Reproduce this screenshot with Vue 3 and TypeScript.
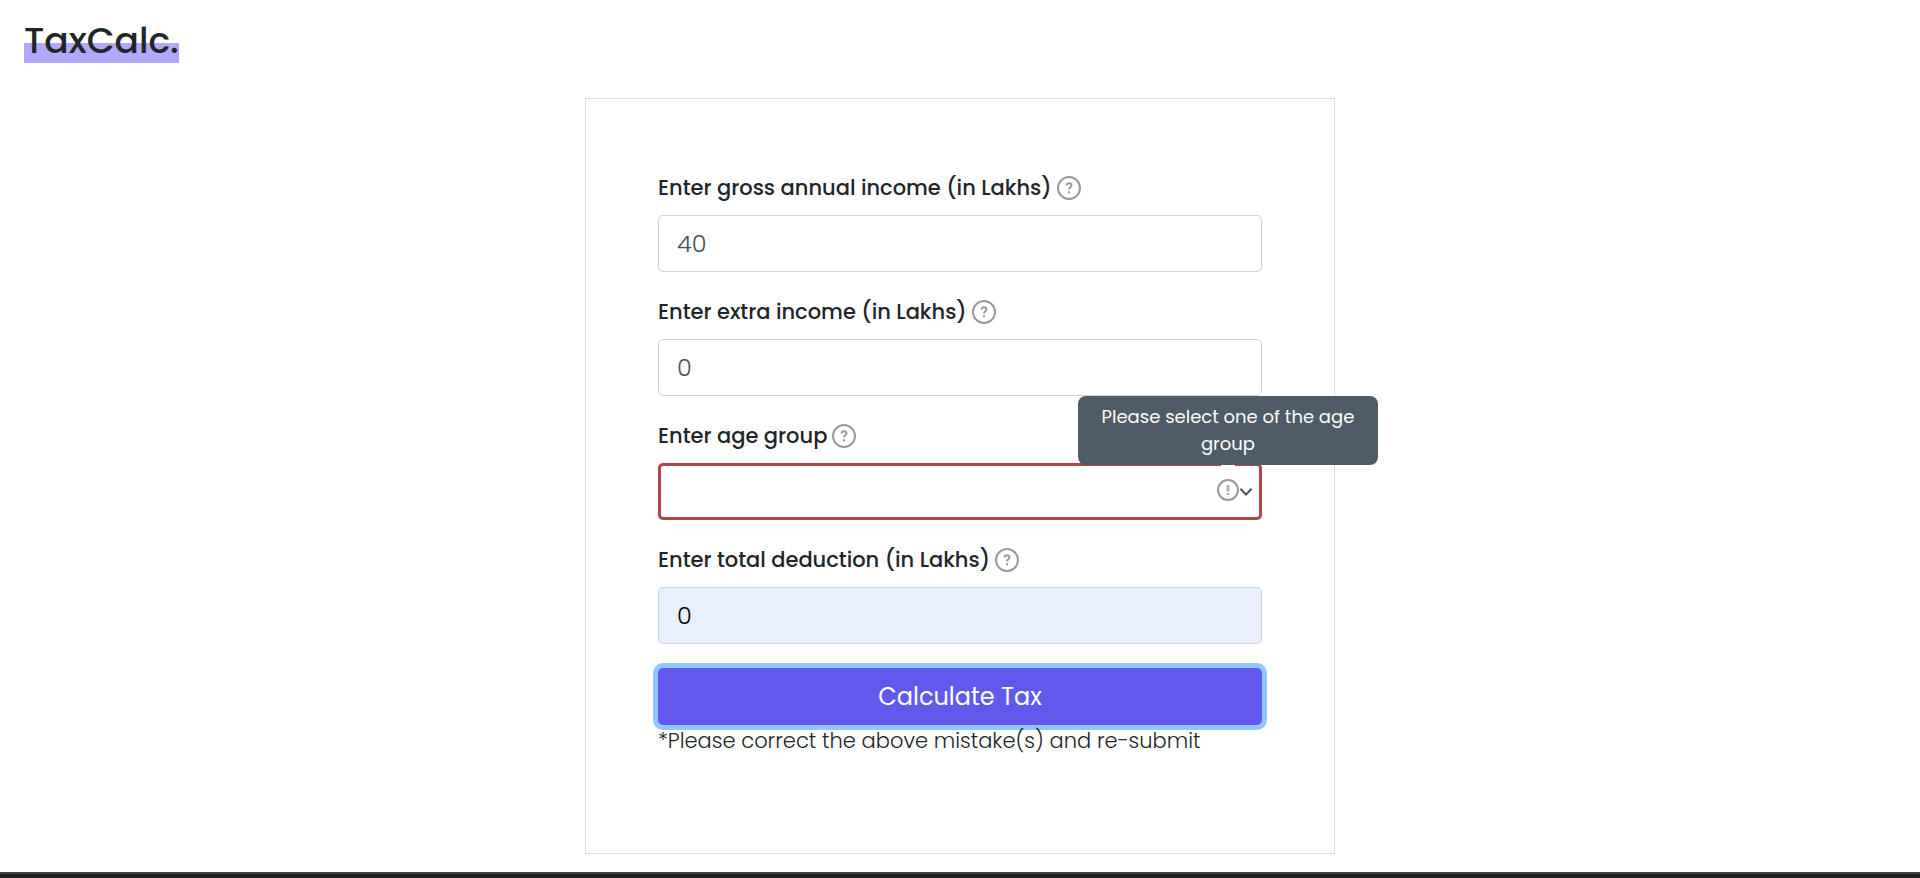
<script setup lang="ts">
import { reactive } from 'vue'

interface Field {
  id: 'income' | 'extra' | 'age' | 'deduction'
  label: string
  kind: 'text' | 'select'
  filled?: boolean
}

const fields: Field[] = [
  { id: 'income', label: 'Enter gross annual income (in Lakhs)', kind: 'text' },
  { id: 'extra', label: 'Enter extra income (in Lakhs)', kind: 'text' },
  { id: 'age', label: 'Enter age group', kind: 'select' },
  { id: 'deduction', label: 'Enter total deduction (in Lakhs)', kind: 'text', filled: true },
]

const ageGroups = ['<40', '≥40 & <60', '≥60']

const values = reactive<Record<Field['id'], string>>({
  income: '40',
  extra: '0',
  age: '',
  deduction: '0',
})
</script>

<template>
  <div class="page">
    <header class="header">
      <h1 class="brand">TaxCalc.</h1>
    </header>

    <main class="main">
      <form class="card" novalidate @submit.prevent>
        <div v-for="field in fields" :key="field.id" class="field">
          <div class="label-row">
            <label :for="field.id">{{ field.label }}</label>
            <svg class="help" viewBox="0 0 24 24" aria-hidden="true">
              <circle cx="12" cy="12" r="11" />
              <path d="M9.600 9.400C9.600 7.900 10.600 7.200 12 7.200s2.400.8 2.400 2.200c0 1.700-2.300 1.800-2.300 4" />
              <path d="M12 15.200v2" />
            </svg>
          </div>
          <div v-if="field.kind === 'select'" class="select-wrap">
            <select :id="field.id" v-model="values.age" class="control invalid" aria-describedby="age-error">
              <option value=""></option>
              <option v-for="group in ageGroups" :key="group" :value="group">{{ group }}</option>
            </select>
            <div class="marks">
              <span class="warning">
                <svg class="alert" viewBox="0 0 22 22" aria-hidden="true">
                  <circle cx="11" cy="11" r="10" />
                  <path d="M11 6v6.5M11 14v2" stroke="#b0b0b0" stroke-width="3" />
                </svg>
                <span id="age-error" class="tooltip" role="tooltip">Please select one of the age group</span>
              </span>
              <svg class="chevron" viewBox="0 0 14 10" aria-hidden="true">
                <path d="M1.500 1.800 7 7.600l5.500-5.800" />
              </svg>
            </div>
          </div>
          <input
            v-else
            :id="field.id"
            v-model="values[field.id]"
            class="control"
            :class="{ filled: field.filled }"
            type="text"
          />
        </div>
        <button class="submit" type="submit">Calculate Tax</button>
        <p class="message">*Please correct the above mistake(s) and re-submit</p>
      </form>
    </main>

    <footer class="footer"></footer>
  </div>
</template>

<style>
body {
  margin: 0;
  background: #fff;
}
</style>

<style scoped>
.page {
  display: flex;
  flex-direction: column;
  min-height: 100vh;
  color: #212529;
  font-family: Poppins, Inter, "Open Sans", sans-serif;
}

.page *,
.page *::before,
.page *::after {
  box-sizing: border-box;
}

.header {
  display: flex;
  padding: 19px 24px 35px;
}

.brand {
  margin: 0;
  font-size: 36px;
  font-weight: 500;
  line-height: 44px;
  background: linear-gradient(transparent 24px, #b1a9f7 24px);
}

.main {
  display: flex;
  justify-content: center;
  padding-bottom: 18px;
}

.card {
  display: flex;
  flex-direction: column;
  width: 750px;
  max-width: 100%;
  padding: 73px 72px 96px;
  border: 1px solid #dcdde2;
}

.field {
  display: flex;
  flex-direction: column;
  gap: 12px;
  margin-bottom: 24px;
}

.label-row {
  display: flex;
  align-items: center;
  gap: 5px;
  font-size: 21px;
  font-weight: 500;
  line-height: 31px;
}

.help,
.alert {
  flex: none;
  width: 24px;
  height: 24px;
  fill: none;
  stroke: #999;
  stroke-width: 2;
}

.alert {
  display: block;
  width: 22px;
  height: 22px;
}

.control {
  width: 100%;
  height: 57px;
  padding: 0 18px;
  border: 1px solid #ced4da;
  border-radius: 5px;
  outline: none;
  background: #fff;
  color: #495057;
  font-family: inherit;
  font-size: 24px;
  font-weight: 300;
  appearance: none;
}

.filled {
  background: #e8f0fe;
  color: #000;
}

.select-wrap {
  position: relative;
  display: flex;
}

.invalid {
  border: 3px solid #a94a47;
}

.marks {
  position: absolute;
  top: 0;
  right: 9px;
  bottom: 0;
  display: flex;
  align-items: center;
  pointer-events: none;
}

.warning {
  position: relative;
  padding-bottom: 4px;
}

.chevron {
  width: 14px;
  height: 10px;
  fill: none;
  stroke: #454c55;
  stroke-width: 2;
}

.tooltip {
  position: absolute;
  bottom: 100%;
  left: 50%;
  width: 300px;
  margin: 0 0 14px -150px;
  padding: 7px 16px 8px;
  border-radius: 8px;
  background: #4f5b67;
  color: #fff;
  font-size: 18px;
  line-height: 27px;
  text-align: center;
}

.tooltip::after {
  content: "";
  position: absolute;
  top: 100%;
  left: 50%;
  width: 14px;
  height: 3px;
  margin-left: -7px;
  background: #fff;
}

.submit {
  height: 57px;
  border: 0;
  border-radius: 5px;
  background: #6358ec;
  box-shadow: 0 0 0 5px #91c6ff;
  color: #fff;
  font-family: inherit;
  font-size: 24px;
}

.message {
  position: relative;
  margin: 0;
  font-size: 21px;
  font-weight: 300;
  line-height: 32px;
}

.footer {
  height: 6px;
  margin-top: auto;
  border-top: 2px solid #404040;
  background: #1e1e1e;
}
</style>
